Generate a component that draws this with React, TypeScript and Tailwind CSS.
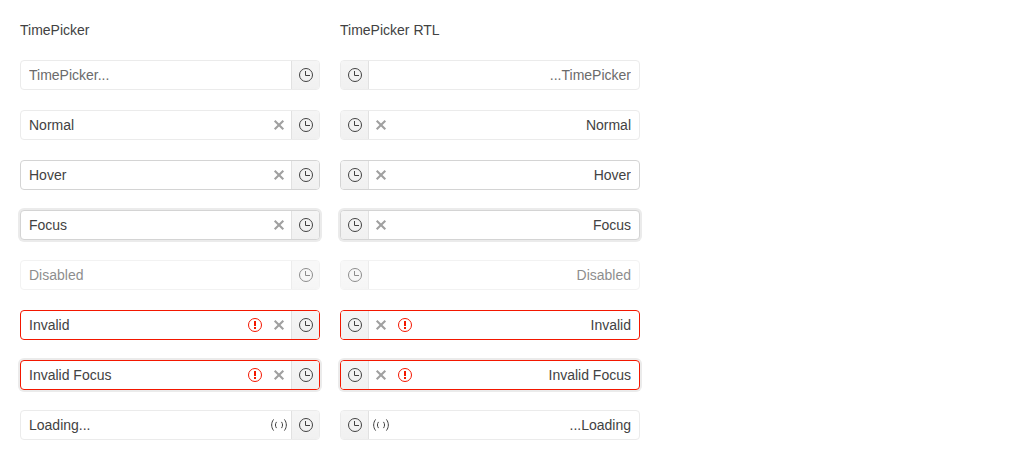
import React from "react";
import clsx from "clsx";

type Status = "normal" | "hover" | "focus" | "disabled" | "invalid" | "invalidFocus" | "loading";

interface PickerItem {
  id: string;
  label: string;
  value?: string;
  placeholder?: string;
  status: Status;
  clearable?: boolean;
}

const items: PickerItem[] = [
  { id: "placeholder", label: "Empty time", placeholder: "TimePicker...", status: "normal" },
  { id: "normal", label: "Normal time", value: "Normal", status: "normal", clearable: true },
  { id: "hover", label: "Hovered time", value: "Hover", status: "hover", clearable: true },
  { id: "focus", label: "Focused time", value: "Focus", status: "focus", clearable: true },
  { id: "disabled", label: "Disabled time", value: "Disabled", status: "disabled" },
  { id: "invalid", label: "Invalid time", value: "Invalid", status: "invalid", clearable: true },
  { id: "invalid-focus", label: "Invalid focused time", value: "Invalid Focus", status: "invalidFocus", clearable: true },
  { id: "loading", label: "Loading time", value: "Loading...", status: "loading" },
];

const frameStyles: Record<Status, string> = {
  normal: "border-[#ebebeb]",
  hover: "border-[#d4d4d4]",
  focus: "border-[#d4d4d4] ring-2 ring-[#ebebeb]",
  disabled: "border-[#ebebeb] opacity-60",
  invalid: "border-[#f31700]",
  invalidFocus: "border-[#f31700] ring-2 ring-[#ebebeb]",
  loading: "border-[#ebebeb]",
};

function ClockIcon() {
  return (
    <svg className="block size-4" viewBox="0 0 16 16" fill="none" stroke="currentColor" aria-hidden="true">
      <circle cx="8" cy="8" r="6.5" />
      <path d="M7.5 4v4.5H12" />
    </svg>
  );
}

function ClearIcon() {
  return (
    <svg className="block size-4" viewBox="0 0 16 16" fill="none" stroke="currentColor" strokeWidth="2.1" aria-hidden="true">
      <path d="m3.7 3.7 8.6 8.6M12.3 3.7l-8.6 8.6" />
    </svg>
  );
}

function WarningIcon() {
  return (
    <svg className="block size-4 shrink-0" viewBox="0 0 16 16" fill="currentColor" role="img" aria-label="Invalid value">
      <circle cx="8" cy="8" r="6.5" fill="none" stroke="currentColor" />
      <path d="M7 4h2v5H7zM7 10h2v2H7z" />
    </svg>
  );
}

function LoadingIcon() {
  return (
    <svg className="block size-4 shrink-0" viewBox="0 0 16 16" fill="none" stroke="currentColor" role="img" aria-label="Loading">
      <path d="M2.6 2.4C0 6 0 10 2.6 13.6M13.4 2.4C16 6 16 10 13.4 13.6" />
      <path d="M5.5 4.9C4.1 7 4.1 9 5.5 11.1M10.5 4.9C11.9 7 11.9 9 10.5 11.1" />
    </svg>
  );
}

function TimePicker({ item }: { item: PickerItem }) {
  const disabled = item.status === "disabled";
  const invalid = item.status === "invalid" || item.status === "invalidFocus";
  return (
    <div className={clsx("flex overflow-hidden rounded border bg-white", frameStyles[item.status])}>
      <input
        type="text"
        aria-label={item.label}
        defaultValue={item.value}
        placeholder={item.placeholder}
        disabled={disabled}
        aria-invalid={invalid}
        className="min-w-0 flex-1 bg-transparent px-2 py-1 text-sm leading-5 text-[#424242] outline-none placeholder:text-[#6b6b6b]"
      />
      <div className="flex items-center gap-2 px-1">
        {invalid && (
          <span className="text-[#f31700]">
            <WarningIcon />
          </span>
        )}
        {item.clearable && (
          <button type="button" aria-label="Clear" className="text-[#a0a0a0]">
            <ClearIcon />
          </button>
        )}
        {item.status === "loading" && <LoadingIcon />}
      </div>
      <button
        type="button"
        aria-label="Open time list"
        disabled={disabled}
        className="flex w-7 shrink-0 items-center justify-center border-s border-[#e1e1e1] bg-[#f5f5f5] bg-linear-to-b from-black/0 to-black/2 pl-px"
      >
        <ClockIcon />
      </button>
    </div>
  );
}

function PickerColumn({ title, rtl = false }: { title: string; rtl?: boolean }) {
  return (
    <section className="flex min-w-0 flex-col gap-5">
      <h2 className="text-sm leading-5">{title}</h2>
      <div dir={rtl ? "rtl" : "ltr"} className="flex flex-col gap-5">
        {items.map((item) => (
          <TimePicker key={item.id} item={item} />
        ))}
      </div>
    </section>
  );
}

export default function App() {
  return (
    <main className="grid grid-cols-[repeat(2,minmax(0,300px))] gap-5 bg-white p-5 font-['Liberation_Sans',Arial,sans-serif] text-[#424242]">
      <PickerColumn title="TimePicker" />
      <PickerColumn title="TimePicker RTL" rtl />
    </main>
  );
}
